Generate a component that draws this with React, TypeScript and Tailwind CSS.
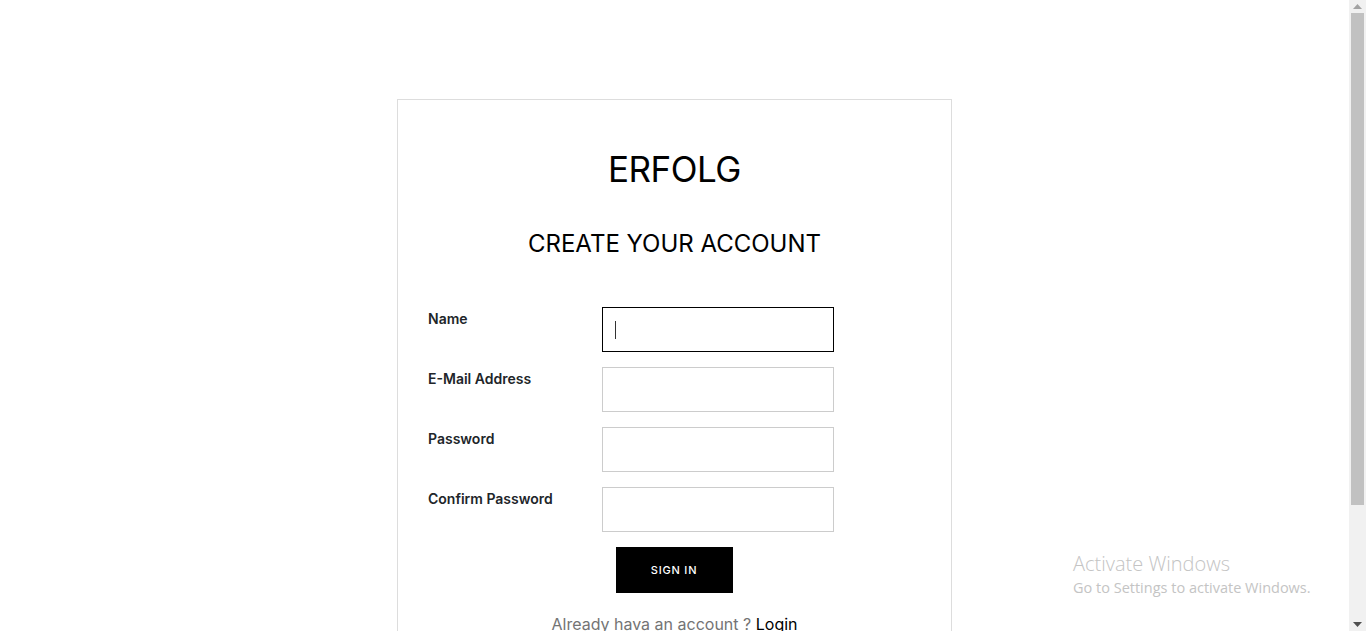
import React from "react";

const font = { fontFamily: "Inter, 'Noto Sans', sans-serif" };

function Field({ label, focused }: { label: string; focused?: boolean }) {
  return (
    <div className="flex items-start">
      <label className="w-[174px] pt-[2px] text-[14px] font-semibold text-[#212529] leading-[20px]">{label}</label>
      <div
        className={
          "w-[232px] h-[45px] flex items-center pl-[12px] " +
          (focused ? "border border-black" : "border border-[#cccccc]")
        }
      >
        {focused && <div className="w-px h-[18px] bg-[#333]" />}
      </div>
    </div>
  );
}

export default function App() {
  return (
    <div className="h-[631px] w-[1366px] flex overflow-hidden bg-white" style={font}>
      <div className="flex-1 relative">
        <div className="flex justify-center pt-[99px]">
          <div className="w-[555px] h-[560px] border border-[#dddddd] flex flex-col items-center">
            <h1 className="mt-[47px] text-[35px] leading-[44px] text-black tracking-[-0.5px]">ERFOLG</h1>
            <h2 className="mt-[38px] text-[24px] leading-[30px] text-black">CREATE YOUR ACCOUNT</h2>
            <div className="mt-[48px] self-start pl-[30px] flex flex-col gap-[15px]">
              <Field label="Name" focused />
              <Field label="E-Mail Address" />
              <Field label="Password" />
              <Field label="Confirm Password" />
            </div>
            <button className="mt-[15px] ml-[-1px] w-[117px] h-[46px] bg-black text-white text-[11px] font-medium tracking-[0.8px]">
              SIGN IN
            </button>
            <p className="mt-[19px] text-[16px] leading-[24px] text-[#747474]">
              Already hava an account ? <span className="text-black">Login</span>
            </p>
          </div>
        </div>
        <div className="absolute left-[1073px] top-[551px] text-[#c4c4c4]" style={{ fontFamily: "'Open Sans', 'Noto Sans', sans-serif" }}>
          <div className="text-[20px] leading-[26px] font-light">Activate Windows</div>
          <div className="text-[14.5px] leading-[20px] mt-[1px]">Go to Settings to activate Windows.</div>
        </div>
      </div>
      <div className="w-[17px] h-full bg-[#f1f1f1] flex flex-col items-center">
        <div className="h-[13px] flex items-center justify-center">
          <svg width="9" height="5" viewBox="0 0 9 5"><path d="M0 5 L4.5 0 L9 5 Z" fill="#a3a3a3" /></svg>
        </div>
        <div className="w-[13px] h-[492px] bg-[#c1c1c1]" />
        <div className="flex-1" />
        <div className="h-[13px] flex items-center justify-center">
          <svg width="9" height="5" viewBox="0 0 9 5"><path d="M0 0 L9 0 L4.5 5 Z" fill="#505050" /></svg>
        </div>
      </div>
    </div>
  );
}
